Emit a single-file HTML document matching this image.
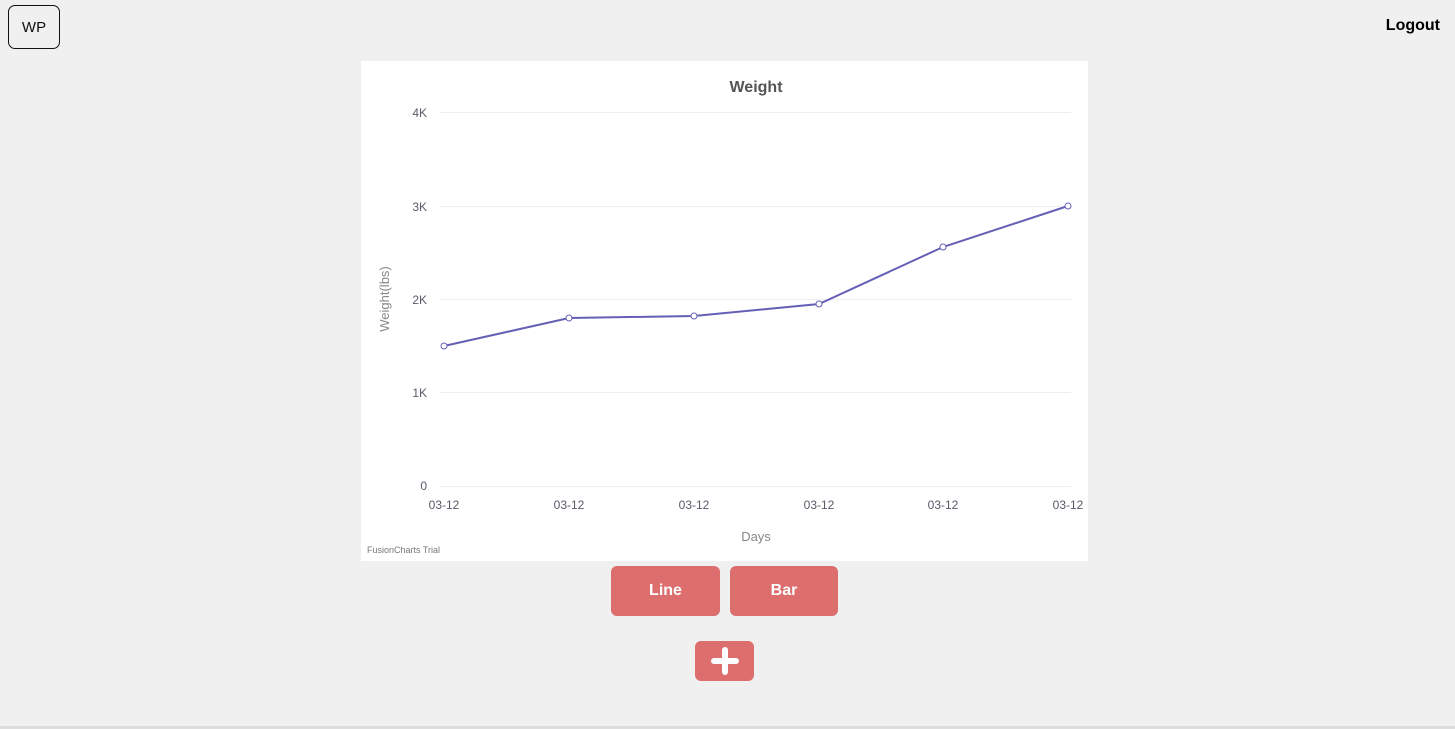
<!DOCTYPE html>
<html><head><meta charset="utf-8"><style>
html,body{margin:0;padding:0;width:1455px;height:729px;background:#f0f0f0;font-family:"Liberation Sans",sans-serif;overflow:hidden;position:relative}
.wp{position:absolute;left:8px;top:5px;width:52px;height:44px;border:1px solid #111;border-radius:7px;box-sizing:border-box;display:flex;align-items:center;justify-content:center;font-size:15px;color:#111;background:#f0f0f0;padding-top:1px}
.logout{position:absolute;right:15px;top:17px;font-size:16px;font-weight:bold;color:#000}
.chart{position:absolute;left:361px;top:61px;width:727px;height:500px;background:#fff}
.btn{position:absolute;background:#dc6e6e;color:#fff;font-weight:bold;font-size:16px;border-radius:6px;display:flex;align-items:center;justify-content:center}
.bottom{position:absolute;left:0;top:726px;width:1455px;height:3px;background:#ddd}
</style></head><body>
<div class="wp">WP</div>
<div class="logout">Logout</div>
<div class="chart">
<svg width="727" height="500" xmlns="http://www.w3.org/2000/svg" font-family="Liberation Sans, sans-serif">
<text x="395" y="31" text-anchor="middle" font-size="16" font-weight="bold" fill="#555">Weight</text>
<g stroke="#eeeeee" stroke-width="1">
<line x1="79" y1="51.5" x2="710" y2="51.5"/><line x1="79" y1="145.5" x2="710" y2="145.5"/>
<line x1="79" y1="238.5" x2="710" y2="238.5"/><line x1="79" y1="331.5" x2="710" y2="331.5"/>
<line x1="79" y1="425.5" x2="710" y2="425.5"/></g>
<g font-size="12" fill="#5a5a6a" text-anchor="end">
<text x="66" y="56">4K</text><text x="66" y="150">3K</text><text x="66" y="243">2K</text><text x="66" y="336">1K</text><text x="66" y="429">0</text></g>
<g font-size="12" fill="#5a5a6a" text-anchor="middle">
<text x="83" y="448">03-12</text><text x="208" y="448">03-12</text><text x="333" y="448">03-12</text><text x="458" y="448">03-12</text><text x="582" y="448">03-12</text><text x="707" y="448">03-12</text></g>
<text x="395" y="480" text-anchor="middle" font-size="13" fill="#888">Days</text>
<text transform="translate(28,238) rotate(-90)" text-anchor="middle" font-size="13" fill="#888">Weight(lbs)</text>
<text x="6" y="492" font-size="9" fill="#777">FusionCharts Trial</text>
<polyline fill="none" stroke="#6560b6" stroke-width="2" points="83,285 208,257 333,255 458,243 582,186 707,145"/>
<g fill="#fff" stroke="#6560b6" stroke-width="1">
<circle cx="83" cy="285" r="3"/><circle cx="208" cy="257" r="3"/><circle cx="333" cy="255" r="3"/><circle cx="458" cy="243" r="3"/><circle cx="582" cy="186" r="3"/><circle cx="707" cy="145" r="3"/></g>
</svg></div>
<div class="btn" style="left:611px;top:566px;width:109px;height:50px">Line</div>
<div class="btn" style="left:730px;top:566px;width:108px;height:50px">Bar</div>
<div class="btn" style="left:695px;top:641px;width:59px;height:40px">
<svg width="30" height="30" viewBox="0 0 30 30"><path d="M15 4V26M4 15H26" stroke="#fff" stroke-width="6" stroke-linecap="round"/></svg></div>
<div class="bottom"></div>
</body></html>
